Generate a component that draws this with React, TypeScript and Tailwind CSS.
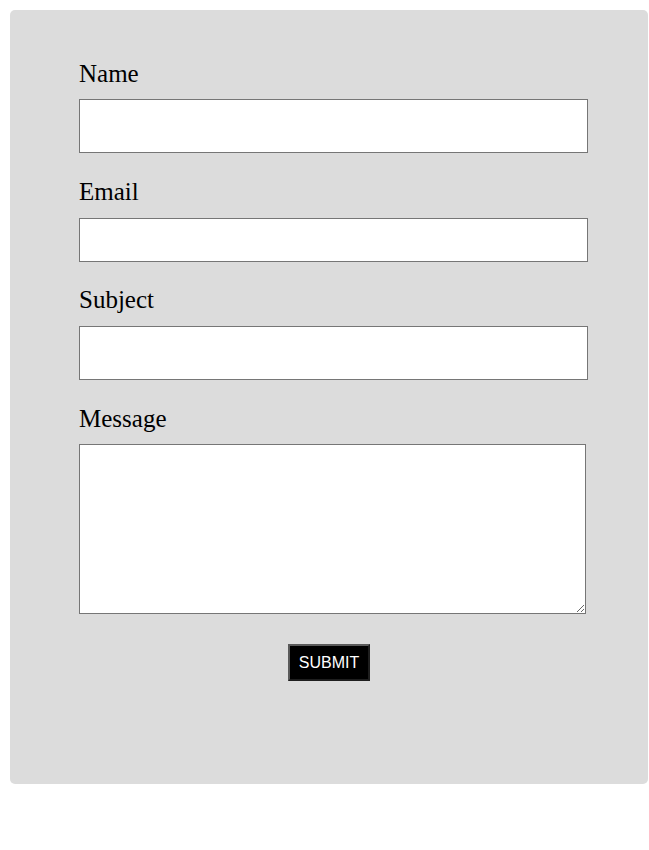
export default function App() {
  return (
    <div className="bg-white min-h-[850px] pt-[10px] pl-[10px]">
      <form
        onSubmit={(e) => e.preventDefault()}
        className="w-[638px] h-[774px] bg-[#dcdcdc] rounded-[5px] pt-[50px] pl-[69px] flex flex-col font-['Liberation_Serif',serif] text-black"
      >
        <label htmlFor="name" className="block text-[25px] leading-[28px] mb-[11px]">Name</label>
        <input id="name" type="text" className="block w-[509px] h-[54px] bg-white border border-[#767676] mb-[25px]" />

        <label htmlFor="email" className="block text-[25px] leading-[28px] mb-[12px]">Email</label>
        <input id="email" type="email" className="block w-[509px] h-[44px] bg-white border border-[#767676] mb-[24px]" />

        <label htmlFor="subject" className="block text-[25px] leading-[28px] mb-[12px]">Subject</label>
        <input id="subject" type="text" className="block w-[509px] h-[54px] bg-white border border-[#767676] mb-[25px]" />

        <label htmlFor="message" className="block text-[25px] leading-[28px] mb-[11px]">Message</label>
        <textarea id="message" className="block w-[507px] h-[170px] bg-white border border-[#767676] resize" />

        <div className="w-[638px] -ml-[69px] flex justify-center mt-[30px]">
          <button
            type="submit"
            className="bg-black text-white font-['Liberation_Sans',Arial,sans-serif] text-[16px] leading-[19px] px-[9px] py-[7px] border-2 border-t-[#5a5a5a] border-l-[#5a5a5a] border-b-[#1e1e1e] border-r-[#1e1e1e]"
          >
            SUBMIT
          </button>
        </div>
      </form>
    </div>
  );
}
